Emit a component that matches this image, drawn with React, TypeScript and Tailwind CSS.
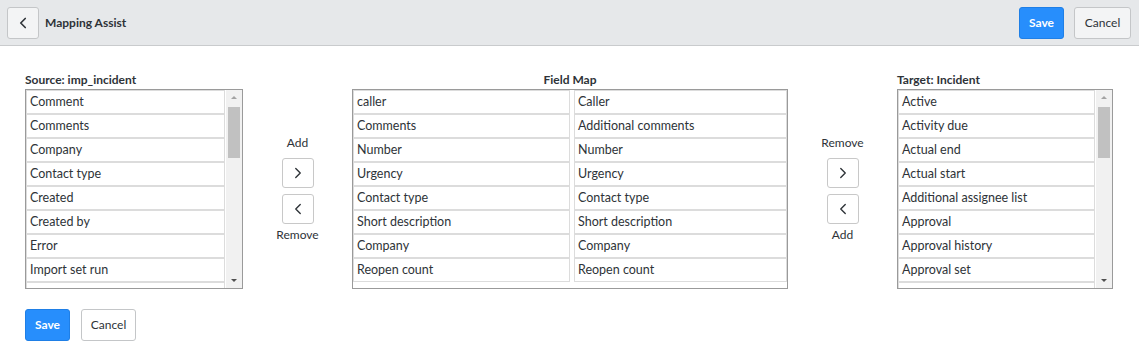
import { ChevronLeft, ChevronRight } from 'lucide-react'

const source = ['Comment', 'Comments', 'Company', 'Contact type', 'Created', 'Created by', 'Error', 'Import set run', '']
const target = ['Active', 'Activity due', 'Actual end', 'Actual start', 'Additional assignee list', 'Approval', 'Approval history', 'Approval set', '']
const mapLeft = ['caller', 'Comments', 'Number', 'Urgency', 'Contact type', 'Short description', 'Company', 'Reopen count']
const mapRight = ['Caller', 'Additional comments', 'Number', 'Urgency', 'Contact type', 'Short description', 'Company', 'Reopen count']

function Row({ text }: { text: string }) {
  return <div className="h-[22px] shrink-0 bg-white pl-[3px] leading-[21px] whitespace-nowrap overflow-hidden">{text}</div>
}

function ListBox({ label, items }: { label: string; items: string[] }) {
  return (
    <div className="flex flex-col">
      <div className="h-[16px] text-[12px] font-bold leading-[14px]">{label}</div>
      <div className="flex h-[200px] overflow-hidden border border-[#9a9a9a] bg-white">
        <div className="flex flex-1 flex-col gap-[2px] overflow-hidden bg-[#dcdcdc] p-px">
          {items.map((t, i) => (
            <Row key={i} text={t} />
          ))}
        </div>
        <div className="relative ml-px w-[16px] bg-[#f1f1f1]">
          <div className="absolute left-[5px] top-[6px] h-0 w-0 border-x-[3px] border-b-[3px] border-x-transparent border-b-[#a3a3a3]" />
          <div className="absolute left-[2px] top-[17px] h-[51px] w-[12px] bg-[#c1c1c1]" />
          <div className="absolute bottom-[6px] left-[5px] h-0 w-0 border-x-[3px] border-t-[3px] border-x-transparent border-t-[#505050]" />
        </div>
      </div>
    </div>
  )
}

function Controls({ top, bottom }: { top: string; bottom: string }) {
  return (
    <div className="mt-[16px] flex h-[200px] w-[109px] flex-col items-center justify-center text-[12px]">
      <div className="mb-[7px] leading-[16px]">{top}</div>
      <button className="flex h-[30px] w-[32px] items-center justify-center rounded-[3px] border border-[#c8c8c8] bg-white">
        <ChevronRight className="h-[18px] w-[18px]" strokeWidth={1.8} />
      </button>
      <button className="mt-[6px] flex h-[30px] w-[32px] items-center justify-center rounded-[3px] border border-[#c8c8c8] bg-white">
        <ChevronLeft className="h-[18px] w-[18px]" strokeWidth={1.8} />
      </button>
      <div className="mt-[3px] leading-[16px]">{bottom}</div>
    </div>
  )
}

export default function App() {
  return (
    <div className="h-[350px] w-[1139px] bg-white text-[12.5px] text-[#2e3338]" style={{ fontFamily: 'Lato, "Open Sans", sans-serif' }}>
      {/* Header */}
      <div className="flex h-[46px] items-center border-b border-[#c9cbcd] bg-[#e6e8ea] px-[7px]">
        <button className="flex h-[32px] w-[32px] items-center justify-center rounded-[3px] border border-[#c4c6c8] bg-[#f3f4f5]">
          <ChevronLeft className="h-[18px] w-[18px]" strokeWidth={2.2} />
        </button>
        <div className="ml-[6px] text-[12px] font-bold">Mapping Assist</div>
        <div className="ml-auto flex items-center gap-[10px] pr-px">
          <button className="h-[32px] w-[45px] rounded-[3px] border border-[#1f7fe6] bg-[#278efc] text-[12px] font-bold text-white">Save</button>
          <button className="h-[32px] w-[57px] rounded-[3px] border border-[#c4c6c8] bg-[#f3f4f5] text-[12px]">Cancel</button>
        </div>
      </div>

      {/* Body */}
      <div className="px-[25px] pt-[27px]">
        <div className="flex">
          <div className="w-[218px]">
            <ListBox label="Source: imp_incident" items={source} />
          </div>
          <Controls top="Add" bottom="Remove" />
          <div className="flex w-[436px] flex-col">
            <div className="h-[16px] text-center text-[12px] font-bold leading-[14px]">Field Map</div>
            <div className="flex h-[200px] items-start gap-[4px] overflow-hidden border border-[#9a9a9a] bg-white">
              <div className="flex w-[217px] flex-col gap-[2px] bg-[#dcdcdc] p-px">
                {mapLeft.map((t, i) => (
                  <Row key={i} text={t} />
                ))}
              </div>
              <div className="flex flex-1 flex-col gap-[2px] bg-[#dcdcdc] p-px">
                {mapRight.map((t, i) => (
                  <Row key={i} text={t} />
                ))}
              </div>
            </div>
          </div>
          <Controls top="Remove" bottom="Add" />
          <div className="w-[216px]">
            <ListBox label="Target: Incident" items={target} />
          </div>
        </div>

        <div className="mt-[20px] flex gap-[11px]">
          <button className="h-[32px] w-[45px] rounded-[3px] border border-[#1f7fe6] bg-[#278efc] text-[12px] font-bold text-white">Save</button>
          <button className="h-[32px] w-[55px] rounded-[3px] border border-[#c4c6c8] bg-white text-[12px]">Cancel</button>
        </div>
      </div>
    </div>
  )
}
